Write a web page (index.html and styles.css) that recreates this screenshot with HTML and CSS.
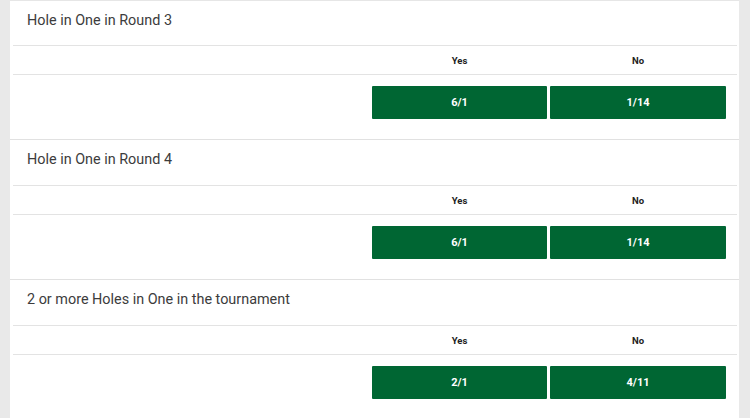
FILE: index.html
```html
<!DOCTYPE html>
<html>
<head>
    <title>Golf Specials</title>
    <link rel="stylesheet" href="styles.css">
</head>
<body>
    <div class="panel">
        <div class="market">
            <div class="market-title">Hole in One in Round 3</div>
            <div class="outcome-head">
                <span></span>
                <span class="col-label">Yes</span>
                <span class="col-label">No</span>
            </div>
            <div class="outcome-row">
                <span></span>
                <button class="price">6/1</button>
                <button class="price">1/14</button>
            </div>
        </div>

        <div class="market">
            <div class="market-title">Hole in One in Round 4</div>
            <div class="outcome-head">
                <span></span>
                <span class="col-label">Yes</span>
                <span class="col-label">No</span>
            </div>
            <div class="outcome-row">
                <span></span>
                <button class="price">6/1</button>
                <button class="price">1/14</button>
            </div>
        </div>

        <div class="market">
            <div class="market-title">2 or more Holes in One in the tournament</div>
            <div class="outcome-head">
                <span></span>
                <span class="col-label">Yes</span>
                <span class="col-label">No</span>
            </div>
            <div class="outcome-row">
                <span></span>
                <button class="price">2/1</button>
                <button class="price">4/11</button>
            </div>
        </div>
    </div>
</body>
</html>
```

FILE: styles.css
```css
body { margin: 0; background: #e9e9e9; font-family: Roboto, "Liberation Sans", Arial, sans-serif; }
.panel { background: #fff; margin: 0 11px 0 10px; border-top: 1px solid #e6e6e6; }
.market { border-bottom: 1px solid #e1e1e1; padding: 0 2px 0 3px; }
.market:first-child .market-title { height: 45px; }
.market-title { height: 46px; box-sizing: border-box; padding: 11px 0 0 14px; line-height: 18px; font-size: 14.4px; color: #3c3c3c; border-bottom: 1px solid #e3e3e3; }
.outcome-head, .outcome-row { display: grid; grid-template-columns: 1fr 175px 176px; column-gap: 3px; padding-right: 11px; }
.outcome-head { height: 29px; box-sizing: border-box; align-items: center; border-bottom: 1px solid #e3e3e3; }
.col-label { text-align: center; font-size: 9.5px; font-weight: 700; color: #222; }
.outcome-row { padding-top: 11px; padding-bottom: 20px; }
.price { height: 33px; border: none; border-radius: 1px; background: #006633; color: #fff; font-family: inherit; font-size: 11px; font-weight: 700; padding: 0; cursor: pointer; }
.price:hover { background: #00552b; }
```
